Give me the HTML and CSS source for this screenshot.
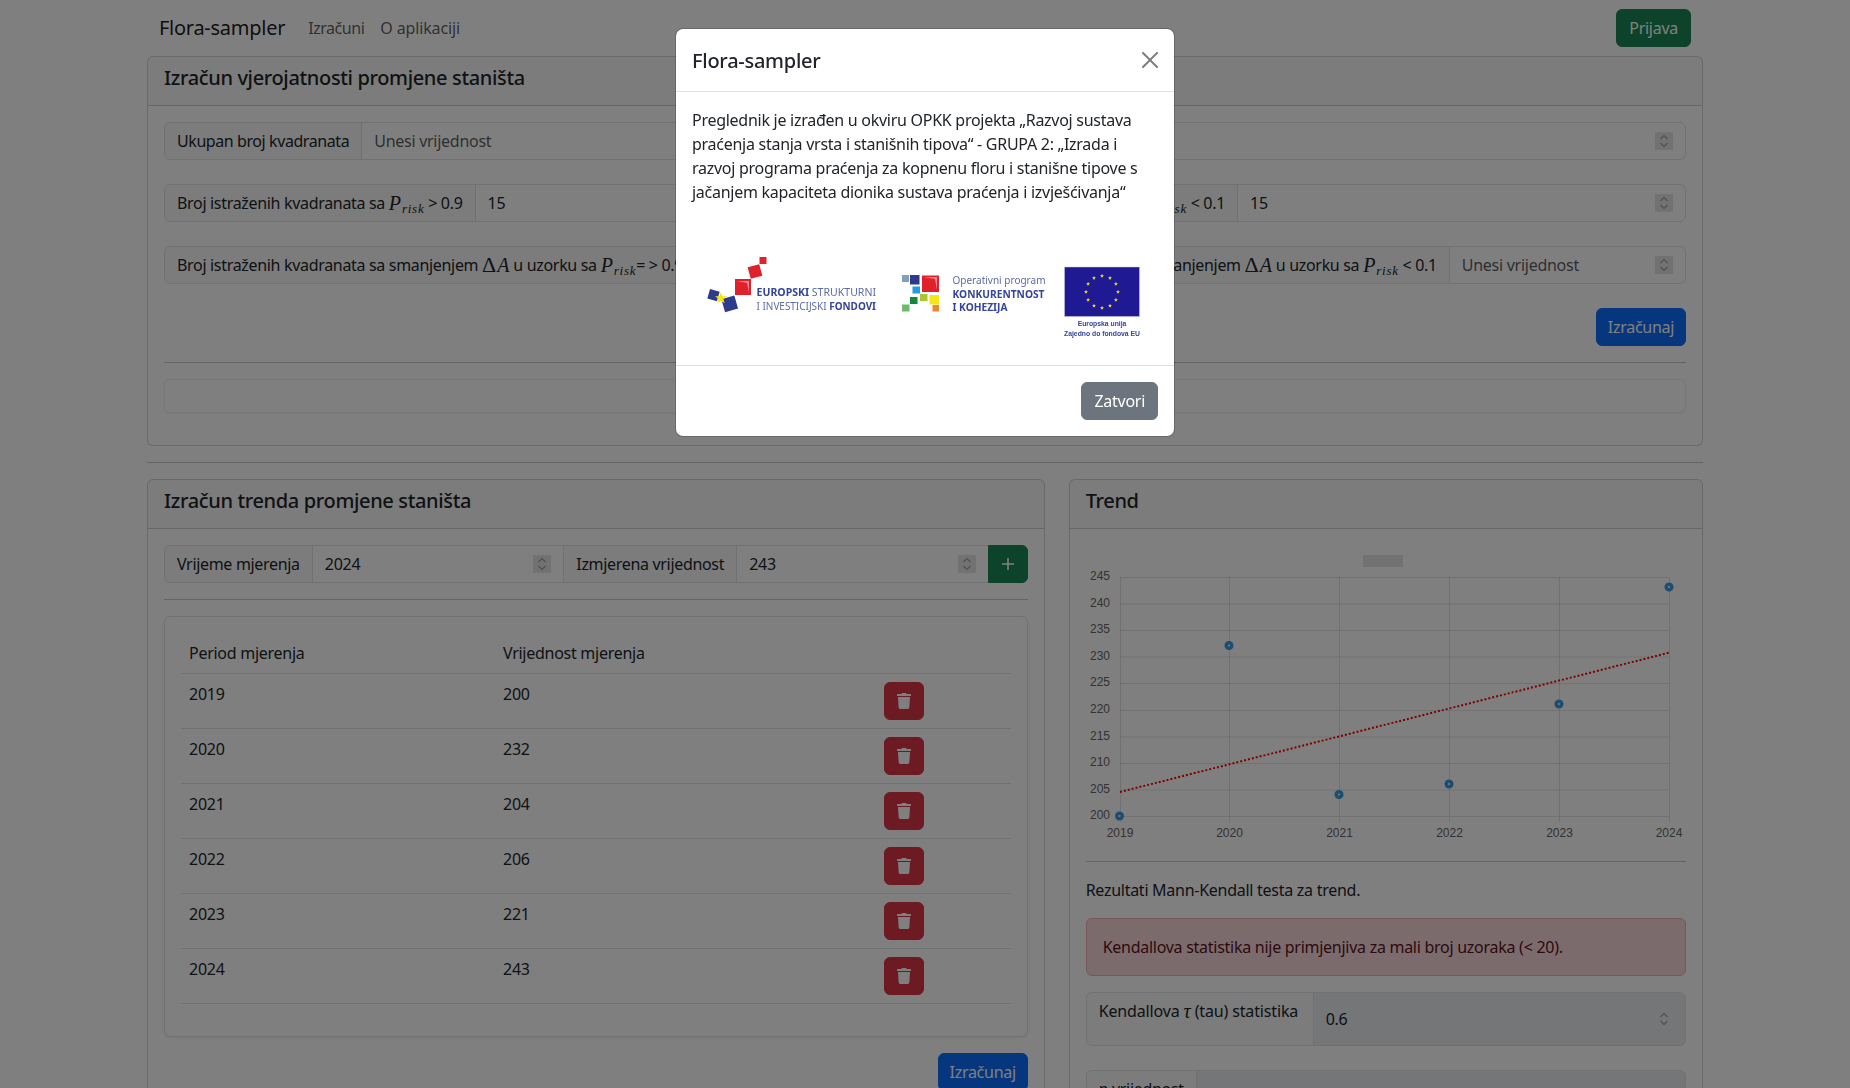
FILE: index.html
```html
<!DOCTYPE html>
<html lang="hr">

<head>
    <meta charset="UTF-8">
    <meta name="viewport" content="width=device-width, initial-scale=1.0">
    <title>Flora-sampler</title>
    <link rel="stylesheet" href="styles.css">
</head>

<body>
    <nav class="navbar">
        <a class="brand" href="#">Flora-sampler</a>
        <a class="navLink" href="#">Izračuni</a>
        <a class="navLink aboutLink" href="#">O aplikaciji</a>
        <button class="btn btnSuccess loginBtn">Prijava</button>
    </nav>

    <main class="page">
        <section class="card">
            <header class="cardHeader">
                <h5>Izračun vjerojatnosti promjene staništa</h5>
            </header>
            <div class="cardBody">
                <div class="row">
                    <div class="col6">
                        <div class="inputGroup mb24">
                            <span class="groupText tightLabel">Ukupan broj kvadranata</span>
                            <input class="control" type="number" placeholder="Unesi vrijednost">
                        </div>
                        <div class="inputGroup mb24">
                            <span class="groupText">Broj istraženih kvadranata sa&nbsp;<span class="math">P<sub>risk</sub></span>&nbsp;&gt; 0.9</span>
                            <input class="control" type="number" value="15">
                        </div>
                        <div class="inputGroup mb24">
                            <span class="groupText">Broj istraženih kvadranata sa smanjenjem&nbsp;<span class="math"><span class="upright">Δ</span>A</span>&nbsp;u uzorku sa&nbsp;<span class="math">P<sub>risk</sub></span>= &gt; 0.9</span>
                            <input class="control" type="number" placeholder="Unesi vrijednost">
                        </div>
                    </div>
                    <div class="col6 rightCol">
                        <div class="inputGroup mb24">
                            <span class="groupText"></span>
                            <input class="control" type="number">
                        </div>
                        <div class="inputGroup mb24">
                            <span class="groupText">Broj istraženih kvadranata sa&nbsp;<span class="math">P<sub>risk</sub></span>&nbsp;&lt; 0.1</span>
                            <input class="control" type="number" value="15">
                        </div>
                        <div class="inputGroup mb24">
                            <span class="groupText">Broj istraženih kvadranata sa smanjenjem&nbsp;<span class="math"><span class="upright">Δ</span>A</span>&nbsp;u uzorku sa&nbsp;<span class="math">P<sub>risk</sub></span>&nbsp;&lt; 0.1</span>
                            <input class="control" type="number" placeholder="Unesi vrijednost">
                        </div>
                    </div>
                </div>
                <div class="actions">
                    <button class="btn btnPrimary">Izračunaj</button>
                </div>
                <hr>
                <div class="emptyResult"></div>
            </div>
        </section>

        <hr>

        <div class="row">
            <div class="col7">
                <section class="card">
                    <header class="cardHeader">
                        <h5>Izračun trenda promjene staništa</h5>
                    </header>
                    <div class="cardBody">
                        <div class="inputGroup">
                            <span class="groupText">Vrijeme mjerenja</span>
                            <input class="control" type="number" value="2024">
                            <span class="groupText">Izmjerena vrijednost</span>
                            <input class="control" type="number" value="243">
                            <button class="btn btnSuccess iconBtn addBtn">
                                <svg class="plusIcon" viewBox="0 0 14 14"><path d="M7 1v12M1 7h12"/></svg>
                            </button>
                        </div>
                        <hr>
                        <div class="tableBox">
                            <table class="measureTable">
                                <thead>
                                    <tr><th class="colPeriod">Period mjerenja</th><th class="colValue">Vrijednost mjerenja</th><th></th></tr>
                                </thead>
                                <tbody>
                                    <tr><td>2019</td><td>200</td><td><button class="btn btnDanger iconBtn"><svg class="trashIcon" viewBox="0 0 448 512"><path d="M432 32H312l-9.4-18.7A24 24 0 0 0 281.1 0H166.8a23.72 23.72 0 0 0-21.4 13.3L136 32H16A16 16 0 0 0 0 48v32a16 16 0 0 0 16 16h416a16 16 0 0 0 16-16V48a16 16 0 0 0-16-16zM53.2 467a48 48 0 0 0 47.9 45h245.8a48 48 0 0 0 47.9-45L416 128H32z"/></svg></button></td></tr>
                                    <tr><td>2020</td><td>232</td><td><button class="btn btnDanger iconBtn"><svg class="trashIcon" viewBox="0 0 448 512"><path d="M432 32H312l-9.4-18.7A24 24 0 0 0 281.1 0H166.8a23.72 23.72 0 0 0-21.4 13.3L136 32H16A16 16 0 0 0 0 48v32a16 16 0 0 0 16 16h416a16 16 0 0 0 16-16V48a16 16 0 0 0-16-16zM53.2 467a48 48 0 0 0 47.9 45h245.8a48 48 0 0 0 47.9-45L416 128H32z"/></svg></button></td></tr>
                                    <tr><td>2021</td><td>204</td><td><button class="btn btnDanger iconBtn"><svg class="trashIcon" viewBox="0 0 448 512"><path d="M432 32H312l-9.4-18.7A24 24 0 0 0 281.1 0H166.8a23.72 23.72 0 0 0-21.4 13.3L136 32H16A16 16 0 0 0 0 48v32a16 16 0 0 0 16 16h416a16 16 0 0 0 16-16V48a16 16 0 0 0-16-16zM53.2 467a48 48 0 0 0 47.9 45h245.8a48 48 0 0 0 47.9-45L416 128H32z"/></svg></button></td></tr>
                                    <tr><td>2022</td><td>206</td><td><button class="btn btnDanger iconBtn"><svg class="trashIcon" viewBox="0 0 448 512"><path d="M432 32H312l-9.4-18.7A24 24 0 0 0 281.1 0H166.8a23.72 23.72 0 0 0-21.4 13.3L136 32H16A16 16 0 0 0 0 48v32a16 16 0 0 0 16 16h416a16 16 0 0 0 16-16V48a16 16 0 0 0-16-16zM53.2 467a48 48 0 0 0 47.9 45h245.8a48 48 0 0 0 47.9-45L416 128H32z"/></svg></button></td></tr>
                                    <tr><td>2023</td><td>221</td><td><button class="btn btnDanger iconBtn"><svg class="trashIcon" viewBox="0 0 448 512"><path d="M432 32H312l-9.4-18.7A24 24 0 0 0 281.1 0H166.8a23.72 23.72 0 0 0-21.4 13.3L136 32H16A16 16 0 0 0 0 48v32a16 16 0 0 0 16 16h416a16 16 0 0 0 16-16V48a16 16 0 0 0-16-16zM53.2 467a48 48 0 0 0 47.9 45h245.8a48 48 0 0 0 47.9-45L416 128H32z"/></svg></button></td></tr>
                                    <tr><td>2024</td><td>243</td><td><button class="btn btnDanger iconBtn"><svg class="trashIcon" viewBox="0 0 448 512"><path d="M432 32H312l-9.4-18.7A24 24 0 0 0 281.1 0H166.8a23.72 23.72 0 0 0-21.4 13.3L136 32H16A16 16 0 0 0 0 48v32a16 16 0 0 0 16 16h416a16 16 0 0 0 16-16V48a16 16 0 0 0-16-16zM53.2 467a48 48 0 0 0 47.9 45h245.8a48 48 0 0 0 47.9-45L416 128H32z"/></svg></button></td></tr>
                                </tbody>
                            </table>
                        </div>
                        <div class="actions">
                            <button class="btn btnPrimary">Izračunaj</button>
                        </div>
                    </div>
                </section>
            </div>
            <div class="col5">
                <section class="card">
                    <header class="cardHeader">
                        <h5>Trend</h5>
                    </header>
                    <div class="cardBody">
                        <svg class="chart" viewBox="0 0 600 299">
                            <rect class="legendBox" x="277" y="9" width="40" height="12"/>
                            <g class="grid">
                                <path d="M34 31.500H583M34 58H583M34 84.500H583M34 111H583M34 137.500H583M34 164.500H583M34 191H583M34 217.500H583M34 244H583M34 270.500H583"/>
                                <path d="M34.500 31V276M143.500 31V276M253.500 31V276M363.500 31V276M473.500 31V276M583.500 31V276"/>
                            </g>
                            <g class="axisY">
                                <text x="24" y="34">245</text>
                                <text x="24" y="60.500">240</text>
                                <text x="24" y="87">235</text>
                                <text x="24" y="113.500">230</text>
                                <text x="24" y="140">225</text>
                                <text x="24" y="167">220</text>
                                <text x="24" y="193.500">215</text>
                                <text x="24" y="220">210</text>
                                <text x="24" y="246.500">205</text>
                                <text x="24" y="273">200</text>
                            </g>
                            <g class="axisX">
                                <text x="34" y="291">2019</text>
                                <text x="143.500" y="291">2020</text>
                                <text x="253.500" y="291">2021</text>
                                <text x="363.500" y="291">2022</text>
                                <text x="473.500" y="291">2023</text>
                                <text x="583" y="291">2024</text>
                            </g>
                            <path class="trendLine" d="M34 246L583 106.700"/>
                            <g class="points">
                                <circle cx="33.500" cy="270" r="2.800"/>
                                <circle cx="143" cy="99.500" r="2.800"/>
                                <circle cx="253" cy="248.500" r="2.800"/>
                                <circle cx="363" cy="238" r="2.800"/>
                                <circle cx="473" cy="158" r="2.800"/>
                                <circle cx="583" cy="41" r="2.800"/>
                            </g>
                        </svg>
                        <hr>
                        <p class="resultsNote">Rezultati Mann-Kendall testa za trend.</p>
                        <div class="alertDanger">Kendallova statistika nije primjenjiva za mali broj uzoraka (&lt; 20).</div>
                        <div class="inputGroup mb24">
                            <span class="groupText tallLabel tauLabel">Kendallova&nbsp;<span class="math">τ</span>&nbsp;(tau) statistika</span>
                            <input class="control" type="number" value="0.6" disabled>
                        </div>
                        <div class="inputGroup mb24">
                            <span class="groupText tallLabel">p vrijednost</span>
                            <input class="control" type="number" disabled>
                        </div>
                    </div>
                </section>
            </div>
        </div>
    </main>

    <div class="backdrop"></div>

    <div class="modal">
        <header class="modalHeader">
            <h5>Flora-sampler</h5>
            <button class="closeBtn" aria-label="Close">
                <svg viewBox="0 0 16 16"><path d="M.293.293a1 1 0 0 1 1.414 0L8 6.586 14.293.293a1 1 0 1 1 1.414 1.414L9.414 8l6.293 6.293a1 1 0 0 1-1.414 1.414L8 9.414l-6.293 6.293a1 1 0 0 1-1.414-1.414L6.586 8 .293 1.707a1 1 0 0 1 0-1.414"/></svg>
            </button>
        </header>
        <div class="modalBody">
            <p>Preglednik je izrađen u okviru OPKK projekta „Razvoj sustava praćenja stanja vrsta i stanišnih tipova“ - GRUPA 2: „Izrada i razvoj programa praćenja za kopnenu floru i stanišne tipove s jačanjem kapaciteta dionika sustava praćenja i izvješćivanja“</p>
            <svg class="logos" viewBox="0 0 466 129">
                <!-- ESI fondovi -->
                <rect class="red" x="67.500" y="37" width="7" height="7"/>
                <rect class="red" x="57" y="45.500" width="12" height="12" transform="rotate(-15 63 51.500)"/>
                <rect class="red" x="43" y="59" width="16" height="16"/>
                <path class="shine" d="M45 61H57V73L55 63Z"/>
                <rect class="navy" x="16.500" y="70" width="10" height="10" transform="rotate(16 21 75)"/>
                <rect class="navy" x="31" y="77" width="13.500" height="13.500" transform="rotate(-16 38 84)"/>
                <path class="star" d="M29 72l1.500 4.200 4.500.1-3.600 2.700 1.300 4.300-3.700-2.500-3.700 2.500 1.300-4.300-3.600-2.700 4.500-.1z"/>
                <text class="logoBold" x="64.500" y="75.500" textLength="119.500" lengthAdjust="spacingAndGlyphs">EUROPSKI <tspan class="logoLight">STRUKTURNI</tspan></text>
                <text class="logoLight" x="64.500" y="89.500" textLength="119.500" lengthAdjust="spacingAndGlyphs">I INVESTICIJSKI <tspan class="logoBold">FONDOVI</tspan></text>
                <!-- OPKK -->
                <rect x="210" y="55" width="7" height="7" fill="#7ea3b8"/>
                <rect x="218" y="55" width="9.500" height="9.500" fill="#2e3a8c"/>
                <rect class="red" x="230" y="55.500" width="17" height="16.500"/>
                <path class="shine" d="M232 57H245V70L243 59Z"/>
                <rect x="220.500" y="66.500" width="7.500" height="7" fill="#1fa0dc"/>
                <rect x="218" y="77" width="7.500" height="7" fill="#0f8a3c"/>
                <rect x="228" y="74" width="7.500" height="7" fill="#a9c82d"/>
                <rect x="237.500" y="75" width="9.500" height="9.500" fill="#f5e616"/>
                <rect x="210" y="84.500" width="7.500" height="7" fill="#6cbb6c"/>
                <rect x="240.500" y="85" width="6.500" height="6.500" fill="#f0872a"/>
                <text class="logoLight" x="260.500" y="64" textLength="93" lengthAdjust="spacingAndGlyphs">Operativni program</text>
                <text class="logoBold" x="260.500" y="77.500" textLength="92" lengthAdjust="spacingAndGlyphs">KONKURENTNOST</text>
                <text class="logoBold" x="260.500" y="91" textLength="55" lengthAdjust="spacingAndGlyphs">I KOHEZIJA</text>
                <!-- EU -->
                <rect class="flag" x="372.500" y="47" width="75" height="49.500"/>
                <g class="star">
                    <path id="euStar" d="M410 53.700l.5 1.500 1.500.1-1.200.9.4 1.500-1.200-.9-1.200.9.4-1.500-1.200-.9 1.500-.1z"/>
                    <use href="#euStar" x="8" y="2.100"/>
                    <use href="#euStar" x="13.900" y="8"/>
                    <use href="#euStar" x="16" y="16"/>
                    <use href="#euStar" x="13.900" y="24"/>
                    <use href="#euStar" x="8" y="29.900"/>
                    <use href="#euStar" y="32"/>
                    <use href="#euStar" x="-8" y="29.900"/>
                    <use href="#euStar" x="-13.900" y="24"/>
                    <use href="#euStar" x="-16" y="16"/>
                    <use href="#euStar" x="-13.900" y="8"/>
                    <use href="#euStar" x="-8" y="2.100"/>
                </g>
                <text class="euText" x="410" y="106">Europska unija</text>
                <text class="euText" x="410" y="115.500">Zajedno do fondova EU</text>
            </svg>
        </div>
        <footer class="modalFooter">
            <button class="btn btnSecondary">Zatvori</button>
        </footer>
    </div>
</body>

</html>
```

FILE: styles.css
```css
* {
    box-sizing: border-box;
}

html,
body {
    height: 100%;
    margin: 0;
    overflow: hidden;
}

body {
    background: #fff;
    color: #212529;
    font-family: "Noto Sans", sans-serif;
    font-size: 16px;
    line-height: 24px;
    letter-spacing: -0.27px;
}

h5 {
    margin: 0;
    font-size: 20px;
    font-weight: 500;
    line-height: 24px;
    letter-spacing: -0.35px;
}

hr {
    margin: 16px 0;
    border: 0;
    border-top: 1px solid rgba(33, 37, 41, 0.25);
}

p {
    margin: 0 0 16px;
}

/* nav */
.navbar {
    display: flex;
    align-items: center;
    height: 56px;
    padding: 8px 12px;
    width: 1556px;
    margin: 0 auto;
}

.brand {
    margin-right: 15px;
    color: rgba(0, 0, 0, 0.9);
    font-size: 20px;
    line-height: 30px;
    text-decoration: none;
}

.navLink {
    padding: 8px;
    color: rgba(0, 0, 0, 0.65);
    text-decoration: none;
    letter-spacing: -0.45px;
}

.aboutLink {
    letter-spacing: -0.15px;
}

.loginBtn {
    margin-left: auto;
}

.page {
    width: 1556px;
    margin: 0 auto;
}

/* grid */
.row {
    display: flex;
    margin: 0 -12px;
}

.col6 {
    width: 50%;
    padding: 0 12px;
}

.rightCol {
    padding-left: 1.500px;
}

.col7 {
    width: 58.3333%;
    padding: 0 12px;
}

.col5 {
    width: 41.6667%;
    padding: 0 12px;
}

/* cards */
.card {
    border: 1px solid rgba(0, 0, 0, 0.175);
    border-radius: 6px;
    background: #fff;
}

.cardHeader {
    padding: 9px 16px 15px;
    height: 49px;
    background: rgba(33, 37, 41, 0.03);
    border-bottom: 1px solid rgba(0, 0, 0, 0.175);
    border-radius: 5px 5px 0 0;
}

.cardBody {
    padding: 16px;
}

/* inputs */
.inputGroup {
    display: flex;
    align-items: stretch;
    width: 100%;
}

.mb24 {
    margin-bottom: 24px;
}

.groupText {
    display: flex;
    align-items: center;
    padding: 6px 12px;
    white-space: nowrap;
    letter-spacing: -0.32px;
    background: #f8f9fa;
    border: 1px solid #dee2e6;
    margin-left: -1px;
}

.tightLabel {
    letter-spacing: -0.42px;
}

.inputGroup > :first-child {
    margin-left: 0;
    border-radius: 6px 0 0 6px;
}

.inputGroup > :last-child {
    border-radius: 0 6px 6px 0;
}

.tallLabel {
    align-items: flex-start;
    height: 54px;
}

.tauLabel {
    width: 228px;
    letter-spacing: -0.15px;
}

.control {
    flex: 1 1 0;
    min-width: 0;
    height: auto;
    margin-left: -1px;
    padding: 6px 12px;
    font: inherit;
    letter-spacing: inherit;
    color: #212529;
    background: #fff;
    border: 1px solid #dee2e6;
    outline: 0;
}

.control::placeholder {
    color: rgba(33, 37, 41, 0.75);
}

.control::-webkit-inner-spin-button {
    -webkit-appearance: none;
    align-self: center;
    width: 18px;
    height: 18px;
    opacity: 1;
    background: #e4e4e4 url("data:image/svg+xml,%3Csvg xmlns='http://www.w3.org/2000/svg' width='18' height='18' fill='none' stroke='%23a0a0a0' stroke-width='1.2'%3E%3Cpath d='M5.5 7 9 3.500 12.500 7M5.500 11 9 14.500 12.500 11'/%3E%3C/svg%3E") center no-repeat;
}

.control:disabled {
    background: #e9ecef;
}

.control:disabled::-webkit-inner-spin-button {
    background-color: transparent;
}

/* buttons */
.btn {
    display: inline-block;
    height: 38px;
    padding: 6px 12px;
    font: inherit;
    letter-spacing: inherit;
    color: #fff;
    border: 1px solid transparent;
    border-radius: 6px;
}

.btnSuccess {
    background: #198754;
    border-color: #198754;
}

.btnPrimary {
    width: 90px;
    padding: 6px 0;
    background: #0d6efd;
    border-color: #0d6efd;
}

.btnDanger {
    background: #dc3545;
    border-color: #dc3545;
}

.btnSecondary {
    background: #6c757d;
    border-color: #6c757d;
}

.iconBtn {
    display: flex;
    align-items: center;
    justify-content: center;
    flex: 0 0 40px;
    width: 40px;
    padding: 0;
}

.addBtn {
    margin-left: -1px;
}

.plusIcon {
    width: 14px;
    height: 14px;
    fill: none;
    stroke: #fff;
    stroke-width: 1.6;
}

.trashIcon {
    width: 14px;
    height: 16px;
    fill: #fff;
}

.actions {
    display: flex;
    justify-content: flex-end;
}

.emptyResult {
    height: 34px;
    margin-bottom: 16px;
    border: 1px solid rgba(0, 0, 0, 0.06);
    border-radius: 6px;
    background: #fff;
    box-shadow: 0 1px 3px rgba(0, 0, 0, 0.05);
}

/* table */
.tableBox {
    padding: 16px;
    margin-bottom: 16px;
    border: 1px solid rgba(0, 0, 0, 0.1);
    border-radius: 6px;
    background: #fff;
    box-shadow: 0 1px 3px rgba(0, 0, 0, 0.08);
}

.measureTable {
    width: 100%;
    margin-bottom: 16px;
    border-collapse: collapse;
    table-layout: fixed;
}

.measureTable th,
.measureTable td {
    padding: 8px;
    text-align: left;
    font-weight: 400;
    vertical-align: top;
    border-bottom: 1px solid #dee2e6;
}

.colPeriod {
    width: 314px;
}

.colValue {
    width: 381px;
}

/* chart */
.chart {
    display: block;
    width: 600px;
    height: 299px;
    margin-top: 1px;
}

.legendBox {
    fill: rgba(0, 0, 0, 0.1);
}

.grid path {
    fill: none;
    stroke: rgba(0, 0, 0, 0.1);
    stroke-width: 1;
}

.axisY text,
.axisX text {
    font-family: "Liberation Sans", sans-serif;
    font-size: 12px;
    letter-spacing: 0;
    fill: #666;
}

.axisY text {
    text-anchor: end;
}

.axisX text {
    text-anchor: middle;
}

.trendLine {
    fill: none;
    stroke: #f00;
    stroke-width: 2;
    stroke-dasharray: 2 2;
}

.points circle {
    fill: rgba(255, 255, 255, 0.7);
    stroke: #3a9be0;
    stroke-width: 3.500;
}

.resultsNote {
    margin-bottom: 16px;
}

.alertDanger {
    padding: 16px;
    margin-bottom: 16px;
    color: #58151c;
    background: #f8d7da;
    border: 1px solid #f1aeb5;
    border-radius: 6px;
}

/* math */
.math {
    font-family: "Liberation Serif", serif;
    font-style: italic;
    font-size: 20px;
    letter-spacing: 0;
}

.math sub {
    margin-left: 1px;
    font-size: 13px;
    line-height: 0;
    letter-spacing: 0.7px;
    vertical-align: -3px;
}

.upright {
    margin-right: 1px;
    font-size: 22px;
    font-style: normal;
}

/* modal */
.backdrop {
    position: fixed;
    inset: 0;
    background: rgba(0, 0, 0, 0.5);
}

.modal {
    position: fixed;
    top: 28px;
    left: 675px;
    width: 500px;
    background: #fff;
    background-clip: padding-box;
    border: 1px solid rgba(0, 0, 0, 0.175);
    border-radius: 8px;
}

.modalHeader {
    display: flex;
    align-items: flex-start;
    justify-content: space-between;
    height: 63px;
    padding: 16px;
    border-bottom: 1px solid #dee2e6;
}

.modalHeader h5 {
    margin-top: 1px;
    line-height: 30px;
    letter-spacing: -0.27px;
}

.closeBtn {
    width: 16px;
    height: 16px;
    margin-top: 7px;
    padding: 0;
    background: none;
    border: 0;
    opacity: 0.5;
}

.closeBtn svg {
    display: block;
    width: 16px;
    height: 16px;
}

.modalBody {
    padding: 16px;
}

.logos {
    display: block;
    width: 466px;
    height: 129px;
    filter: blur(0.3px);
}

.red {
    fill: #e0202a;
}

.navy {
    fill: #2e3a8c;
}

.star {
    fill: #f5e616;
}

.shine {
    fill: rgba(255, 255, 255, 0.45);
}

.flag {
    fill: #1f1a94;
    stroke: #c9cde0;
    stroke-width: 0.5;
}

.logos text {
    font-family: "Noto Sans", sans-serif;
    font-size: 11px;
    letter-spacing: 0;
}

.logoBold {
    font-weight: 700;
    fill: #34449a;
}

.logoLight {
    font-weight: 400;
    fill: #5d6ca6;
}

.logos .euText {
    font-family: "Liberation Sans", sans-serif;
    font-size: 6.800px;
    font-weight: 700;
    fill: #34449a;
    text-anchor: middle;
}

.modalFooter {
    display: flex;
    justify-content: flex-end;
    padding: 16px;
    border-top: 1px solid #dee2e6;
}
```
